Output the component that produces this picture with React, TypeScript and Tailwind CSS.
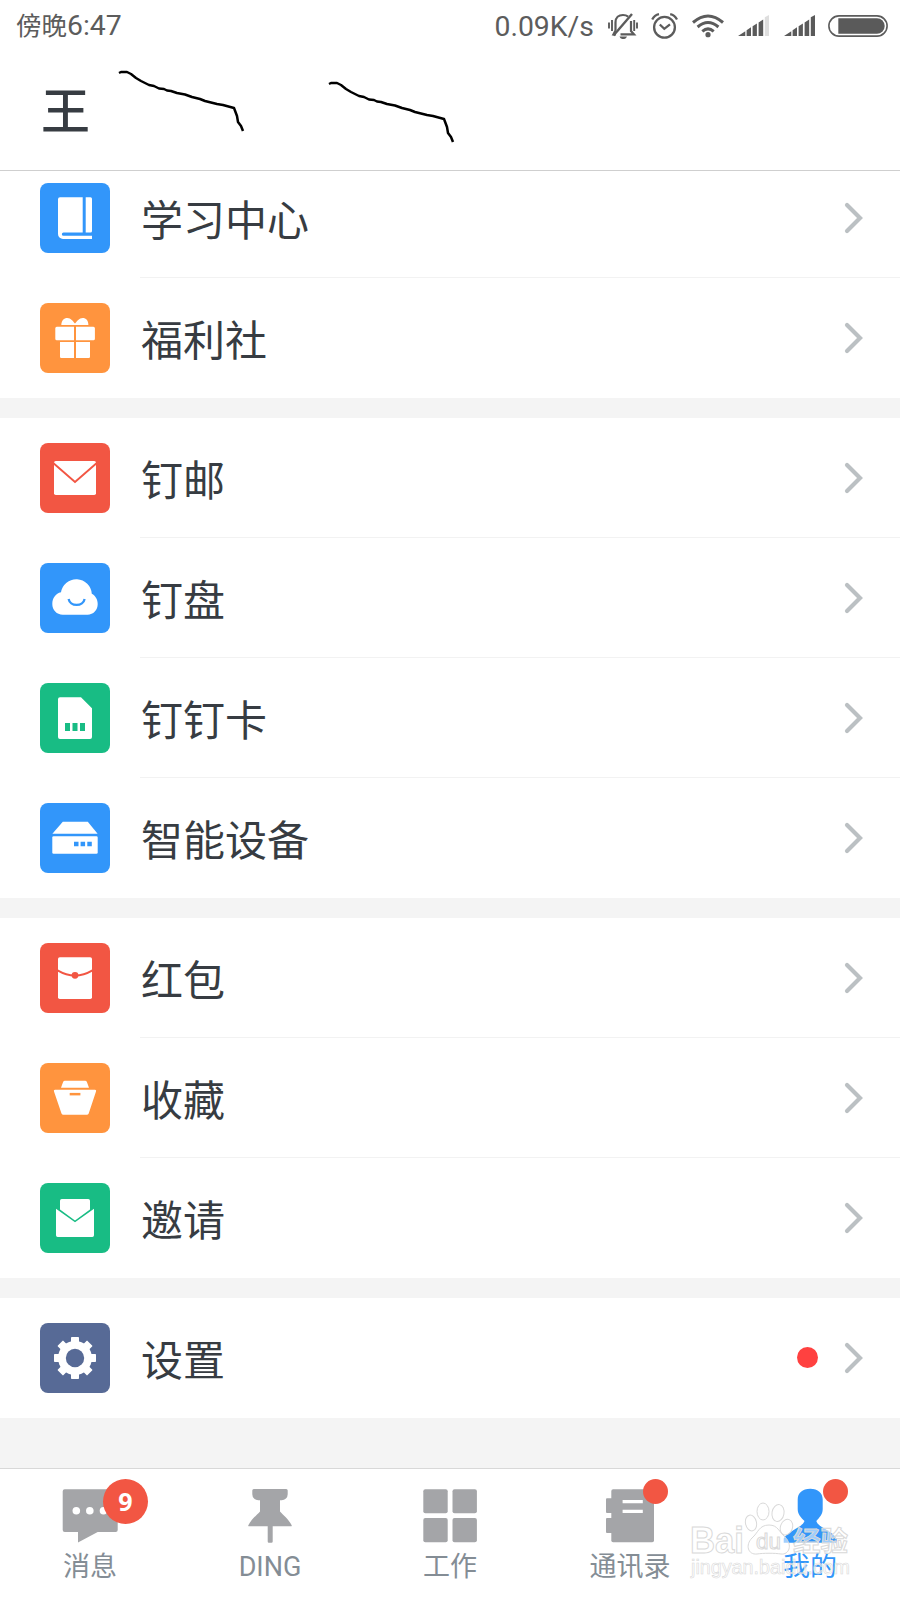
import type { ReactNode } from "react";

type RowProps = {
  label: string;
  color: string;
  icon: ReactNode;
  dot?: boolean;
  last?: boolean;
};

const Row = ({ label, color, icon, dot, last }: RowProps) => {
  return (
    <div className="flex h-[120px] items-center pl-10">
      <div className={`h-[70px] w-[70px] shrink-0 rounded-lg ${color}`}>
        <svg viewBox="0 0 70 70" className="h-full w-full" fill="#fff">
          {icon}
        </svg>
      </div>
      <div
        className={`ml-[30px] flex h-full flex-1 items-center justify-between border-b pr-9 ${
          last ? "border-transparent" : "border-[#f2f2f2]"
        }`}
      >
        <span className="pl-px pt-[9px] text-[42px] leading-none text-[#373c42]">
          {label}
        </span>
        <div className="flex items-center gap-[26px]">
          {dot && <span className="h-[21px] w-[21px] rounded-full bg-[#ff4140]" />}
          <svg width="20" height="34" viewBox="0 0 20 34" fill="none">
            <path
              d="M3 4 16 17 3 30"
              stroke="#bbc0c3"
              strokeWidth="4.2"
              strokeLinecap="round"
            />
          </svg>
        </div>
      </div>
    </div>
  );
};

const BookIcon = (
  <>
    <path d="M20 14.3H42.7V49.5H23.5a1.6 1.6 0 0 0 0 3.3H52V56H23a5 5 0 0 1-5-5V16.3a2 2 0 0 1 2-2Z" />
    <path d="M45.7 14.3H50.5a1.5 1.5 0 0 1 1.5 1.5V48a1.5 1.5 0 0 1-1.5 1.5H45.7Z" />
  </>
);

const GiftIcon = (
  <>
    <path d="M21.3 22C21.5 17.5 24 15 27.3 15 31 15 33 18.3 35 20.6 37 18.3 39 15 42.7 15 46 15 48.4 17.5 48.4 22Z" />
    <path d="M16.8 23.7H34V37.3H16.8a1.5 1.5 0 0 1-1.5-1.5V25.2a1.5 1.5 0 0 1 1.5-1.5ZM36 23.7H53.4a1.5 1.5 0 0 1 1.5 1.5V35.8a1.5 1.5 0 0 1-1.5 1.5H36Z" />
    <path d="M20 39H34V55H21.3A1.3 1.3 0 0 1 20 53.7ZM36 39H50V53.7A1.3 1.3 0 0 1 48.7 55H36Z" />
  </>
);

const MailIcon = (
  <>
    <rect x="14" y="18" width="42" height="34" rx="1.8" />
    <path d="M13.5 20.3 35 38.9 56.5 20.3" fill="none" stroke="#f25643" strokeWidth="1.9" />
  </>
);

const CloudIcon = (
  <>
    <path d="M21 29.3A15.5 15.5 0 0 1 51.8 30.8C55.5 32.7 57.7 36.5 57.7 41 57.7 47 53.5 51.7 47.5 51.7H22.8C16.7 51.7 12.3 47 12.3 41 12.3 35.2 15.6 30.5 21 29.3Z" />
    <path d="M28.6 36A8.1 7 0 0 0 44.6 36" fill="none" stroke="#3296fa" strokeWidth="2.3" />
  </>
);

const SimIcon = (
  <>
    <path d="M20 14.3H41L52 25.3V54a2 2 0 0 1-2 2H20a2 2 0 0 1-2-2V16.3a2 2 0 0 1 2-2Z" />
    <path d="M25 40h5v8h-5ZM32.5 40h5v8h-5ZM40 40h5v8h-5Z" fill="#18bc84" />
  </>
);

const DeviceIcon = (
  <>
    <path d="M22.8 18.7H47.8L57.6 30.8H12.4Z" />
    <rect x="12.3" y="33.3" width="45.4" height="17.5" rx="1.3" />
    <path d="M34 38.7h4.5v4.6h-4.5ZM40.6 38.7h4.5v4.6h-4.5ZM47.3 38.7h4.5v4.6h-4.5Z" fill="#3296fa" />
  </>
);

const PacketIcon = (
  <>
    <rect x="18" y="14.3" width="34" height="41.7" rx="1.8" />
    <path d="M17.5 27.3Q35 37.5 52.5 27.3" fill="none" stroke="#f25643" strokeWidth="2" />
    <circle cx="35" cy="32.3" r="3.4" fill="#f25643" />
  </>
);

const BasketIcon = (
  <>
    <path d="M25 17.7H45a2 2 0 0 1 1.9 1.2L49 24.7H21L23.1 18.9A2 2 0 0 1 25 17.7Z" />
    <path d="M15 26.7H55a1.2 1.2 0 0 1 1 1.7L48.7 50.4a2 2 0 0 1-1.9 1.3H23.4a2 2 0 0 1-1.9-1.3L14 28.4a1.2 1.2 0 0 1 1-1.7Z" />
    <path d="M29.7 29.9h10.7v2.5h-10.7Z" fill="#ff943e" />
  </>
);

const InviteIcon = (
  <>
    <path d="M21.8 16H48.2a1.8 1.8 0 0 1 1.8 1.8V26.6L35 37.4 20 26.6V17.8a1.8 1.8 0 0 1 1.8-1.8Z" />
    <path d="M16 25.7 35 39.3 54 25.7V52.3a1.7 1.7 0 0 1-1.7 1.7H17.7a1.7 1.7 0 0 1-1.7-1.7Z" />
  </>
);

const GearIcon = (
  <>
    {[0, 45, 90, 135].map((deg) => (
      <rect
        key={deg}
        x="31"
        y="14"
        width="8"
        height="42"
        rx="0.8"
        transform={`rotate(${deg} 35 35)`}
      />
    ))}
    <circle cx="35" cy="35" r="17" />
    <circle cx="35" cy="35" r="9.2" fill="#576a96" />
  </>
);

const sections: RowProps[][] = [
  [
    { label: "学习中心", color: "bg-[#3296fa]", icon: BookIcon },
    { label: "福利社", color: "bg-[#ff943e]", icon: GiftIcon },
  ],
  [
    { label: "钉邮", color: "bg-[#f25643]", icon: MailIcon },
    { label: "钉盘", color: "bg-[#3296fa]", icon: CloudIcon },
    { label: "钉钉卡", color: "bg-[#18bc84]", icon: SimIcon },
    { label: "智能设备", color: "bg-[#3296fa]", icon: DeviceIcon },
  ],
  [
    { label: "红包", color: "bg-[#f25643]", icon: PacketIcon },
    { label: "收藏", color: "bg-[#ff943e]", icon: BasketIcon },
    { label: "邀请", color: "bg-[#18bc84]", icon: InviteIcon },
  ],
  [{ label: "设置", color: "bg-[#576a96]", icon: GearIcon, dot: true }],
];

const tabs = [
  {
    label: "消息",
    icon: (
      <>
        <path d="M4.7 4.3H55.7a2 2 0 0 1 2 2V45a2 2 0 0 1-2 2H37.7L18 57.6V47H4.7a2 2 0 0 1-2-2V6.3a2 2 0 0 1 2-2Z" />
        <g fill="#fff">
          <circle cx="16.3" cy="25.7" r="3.8" />
          <circle cx="29.8" cy="25.7" r="3.8" />
          <circle cx="43.5" cy="25.7" r="3.8" />
        </g>
      </>
    ),
    badge: "9",
  },
  {
    label: "DING",
    icon: (
      <path d="M13.8 4H46.2a1.5 1.5 0 0 1 1.5 1.5V9.3a6 6 0 0 1-6 6H40V26.5C43 30 48.5 34 51.7 40.3a.8.8 0 0 1-.7 1H32.7V56.5a1.2 1.2 0 0 1-1.2 1.2H28.9a1.2 1.2 0 0 1-1.2-1.2V41.3H9a.8.8 0 0 1-.7-1C11.5 34 17 30 20 26.5V15.3H18.3a6 6 0 0 1-6-6V5.5A1.5 1.5 0 0 1 13.8 4Z" />
    ),
  },
  {
    label: "工作",
    icon: (
      <>
        <rect x="3.3" y="4.3" width="24.4" height="23.9" rx="2" />
        <rect x="32.5" y="4.3" width="24.4" height="23.9" rx="2" />
        <rect x="3.3" y="33" width="24.4" height="24.2" rx="2" />
        <rect x="32.5" y="33" width="24.4" height="24.2" rx="2" />
      </>
    ),
  },
  {
    label: "通讯录",
    icon: (
      <>
        <rect x="11.3" y="4.3" width="42.7" height="52.9" rx="1.8" />
        <rect x="6" y="13.2" width="8" height="14.9" rx="1" />
        <rect x="6" y="33" width="8" height="15.1" rx="1" />
        <path d="M22.6 15h20.2v3.3h-20.2ZM22.6 24.7h20.2v3.3h-20.2Z" fill="#fff" />
      </>
    ),
    dot: true,
  },
  {
    label: "我的",
    icon: (
      <path d="M30.2 3.7C38 3.7 42.7 8 42.7 14.5V24C42.7 29.5 39.5 32.5 36.3 36 38 42.5 52 45.5 56.7 53.5V57.7H3.7V53.5C8.5 45.5 22.500 42.500 24.5 36 21 32.5 17.7 29.5 17.7 24V14.5C17.7 8 22.5 3.7 30.2 3.7Z" />
    ),
    dot: true,
    active: true,
  },
];

const Signal = ({ full }: { full?: boolean }) => (
  <svg width="31" height="22" viewBox="0 0 31 22" fill="#5a5a5a">
    <path d="M0 21 7.3 16.3V21ZM8.6 15.3 13 12.3V21H8.6ZM14.6 11.3 18.9 8.5V21H14.6ZM20.6 7.4 25.2 4.5V21H20.6Z" />
    <path d="M26.8 2.2 31 0V21H26.8Z" fill={full ? "#5a5a5a" : "#dedede"} />
  </svg>
);

const StatusBar = () => {
  return (
    <div className="flex h-[51px] items-center pl-4 pr-3 text-[#5c5c5c]">
      <div className="flex items-center pt-0.5">
        <span className="pt-px text-[25.5px] leading-none">傍晚</span>
        <span className="text-[28.4px] leading-none">6:47</span>
      </div>
      <span className="ml-auto pt-1 text-[28.4px] leading-none">0.09K/s</span>
      <svg width="30" height="26" viewBox="0 0 30 26" className="ml-[14px]" fill="none" stroke="#5c5c5c" strokeWidth="2.2">
        <path d="M1 9.5v6M4 7v11M26.2 7v11M29 9.5v6" strokeWidth="1.9" />
        <path d="M7.5 17.5V9.5C7.5 4.5 10.8 2 15 2c2 0 3.8.6 5.2 1.6M23 8v10l3 3.3H12.5M7.5 17.5 5.5 21.3H8" />
        <path d="M24 1 5.5 22.5" strokeWidth="2.4" />
        <path d="M11.5 23.5h7.5a4 4 0 0 1-7.5 0Z" fill="#5c5c5c" stroke="none" />
      </svg>
      <svg width="28" height="26" viewBox="0 0 28 26" className="ml-[13px]" fill="none" stroke="#5c5c5c" strokeWidth="2.3">
        <circle cx="13.5" cy="14.3" r="10.4" />
        <path d="M8.8 11.5 13.3 15.8 19 11.3" />
        <path d="M1.2 6.5C2.7 3.7 5 1.8 8 1.2M26 6.5C24.5 3.7 22.2 1.8 19.2 1.2" />
      </svg>
      <svg width="32" height="24" viewBox="0 0 32 24" className="ml-[13px]" fill="none" stroke="#5c5c5c" strokeWidth="3">
        <path d="M1 8.5Q16-4.5 31 8.5M5.6 13Q16 4 26.4 13M10.3 17.3Q16 12.5 21.7 17.3" />
        <circle cx="16" cy="20.7" r="2.6" fill="#5c5c5c" stroke="none" />
      </svg>
      <div className="ml-[14px] flex gap-[15px]">
        <Signal />
        <Signal full />
      </div>
      <svg width="60" height="22" viewBox="0 0 60 22" className="ml-[13px]">
        <rect x="0.9" y="0.9" width="58.2" height="20.2" rx="10.1" fill="none" stroke="#5c5c5c" strokeWidth="1.6" />
        <path d="M10.3 3.3H49a7.7 7.7 0 0 1 0 15.4H10.3Z" fill="#5a5a5a" />
      </svg>
    </div>
  );
};

const Header = () => {
  return (
    <div className="flex h-[120px] items-start border-b border-[#cfcfcf] pl-[41px]">
      <h1 className="pt-[37px] text-[49px] font-medium leading-none text-[#373c42]">
        王
      </h1>
      <svg
        width="340"
        height="76"
        viewBox="0 0 340 76"
        className="ml-7 mt-[17px]"
        fill="none"
        stroke="#000"
        strokeWidth="2.5"
        strokeLinejoin="round"
      >
        <path d="M1 5 3 4 9 4 13 6 18 10 23 13 31 17 36 18 41 20.500 46 21 49 22.500 53 23 59 25 67 26.500 74 29 82 31 87 33 99 36 105 37 116 40 119 48 120 54 123 58 125 63" />
        <path d="M211 16 213 15 219 15 223 17 228 21 233 24 241 28 246 29 251 31.500 256 32 259 33.500 263 34 269 36 277 37.500 284 40 292 42 297 44 309 47 315 48 326 51 329 59 330 65 333 69 335 74" />
      </svg>
    </div>
  );
};

const Watermark = () => {
  return (
    <svg
      width="172"
      height="108"
      viewBox="0 0 172 108"
      className="pointer-events-none absolute bottom-4 right-[42px] font-['Liberation_Sans','Noto_Sans_CJK_SC',sans-serif]"
      fill="#fff"
      fillOpacity="0.55"
      stroke="#d9d9d9"
      strokeWidth="1"
    >
      <g>
        <ellipse cx="65" cy="47" rx="5.5" ry="8" transform="rotate(-12 65 47)" />
        <ellipse cx="77" cy="35.5" rx="6" ry="8.5" />
        <ellipse cx="92" cy="37" rx="6" ry="8.5" transform="rotate(10 92 37)" />
        <ellipse cx="100.5" cy="51" rx="6" ry="8" transform="rotate(20 100 51)" />
        <path d="M83 49C92 49 93 56 99 61 107 69 103 79 95 78 89 77 77 77 71 78 62 79 59 69 66 62 72 57 73 49 83 49Z" />
      </g>
      <text x="4" y="77" fontSize="36" fontWeight="700" textLength="54" lengthAdjust="spacingAndGlyphs">
        Bai
      </text>
      <text x="70" y="73" fontSize="22" textLength="25" lengthAdjust="spacingAndGlyphs">
        du
      </text>
      <text x="107" y="75" fontSize="27.5" fontWeight="700">
        经验
      </text>
      <text x="5" y="98" fontSize="20" strokeWidth="0.6" textLength="159" lengthAdjust="spacingAndGlyphs">
        jingyan.baidu.com
      </text>
    </svg>
  );
};

const TabBar = () => {
  return (
    <nav className="relative flex h-[132px] border-t border-[#d8d8d8] bg-white">
      {tabs.map((tab) => (
        <div
          key={tab.label}
          className={`flex flex-1 flex-col items-center pt-4 ${
            tab.active ? "text-[#3296fa]" : "text-[#848d95]"
          }`}
        >
          <div className="relative h-[60px] w-[60px]">
            <svg
              viewBox="0 0 60 60"
              className="h-full w-full"
              fill={tab.active ? "#3296fa" : "#a4a5a8"}
            >
              {tab.icon}
            </svg>
            {tab.badge && (
              <span className="absolute -right-7 -top-1.5 flex h-[45px] w-[45px] items-center justify-center rounded-full bg-[#f25643] font-['Noto_Sans'] text-[25px] font-bold leading-none text-white">
                {tab.badge}
              </span>
            )}
            {tab.dot && (
              <span className="absolute -right-2 -top-1.5 h-[25px] w-[25px] rounded-full bg-[#f25643]" />
            )}
          </div>
          <span className="mt-[9px] text-[27px] leading-none">{tab.label}</span>
        </div>
      ))}
      <Watermark />
    </nav>
  );
};

const App = () => {
  return (
    <div
      lang="zh-CN"
      className="flex h-[1600px] w-[900px] flex-col overflow-hidden bg-white font-[Roboto,'Noto_Sans_CJK_SC',sans-serif]"
    >
      <StatusBar />
      <Header />
      <main className="flex-1 overflow-hidden bg-[#f4f4f4]">
        {/* list is scrolled slightly under the header */}
        <div className="-mt-[13px] flex flex-col gap-5">
          {sections.map((rows, i) => (
            <section key={i} className="bg-white">
              {rows.map((row, j) => (
                <Row key={row.label} {...row} last={j === rows.length - 1} />
              ))}
            </section>
          ))}
        </div>
      </main>
      <TabBar />
    </div>
  );
};

export default App;
